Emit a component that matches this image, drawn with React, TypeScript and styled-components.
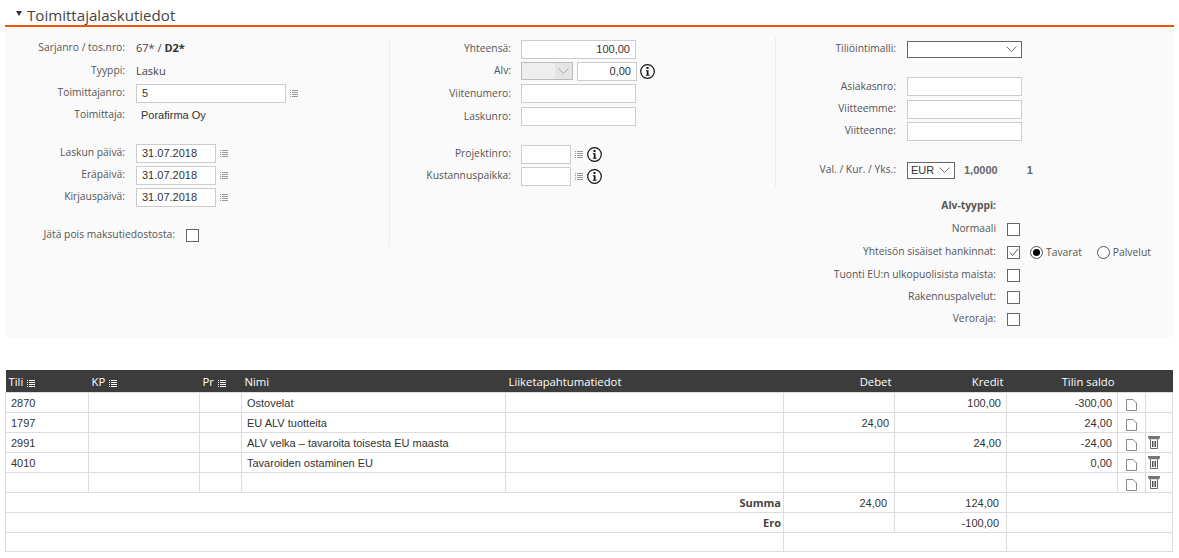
import React from 'react';
import styled, { createGlobalStyle } from 'styled-components';

const GlobalStyle = createGlobalStyle`
  html, body {
    margin: 0;
    padding: 0;
    background: #fff;
    font-family: "Open Sans", "Liberation Sans", sans-serif;
    color: #444;
  }
`;

const Page = styled.div`
  width: 1179px;
  height: 558px;
  overflow: hidden;
  padding: 0 5px;
  box-sizing: border-box;
`;

const Header = styled.div`
  height: 27px;
  border-bottom: 2px solid #f4500a;
  display: flex;
  align-items: center;
  gap: 5px;
  padding: 4px 0 0 11px;
  box-sizing: border-box;
`;

const Caret = styled.span`
  width: 0;
  height: 0;
  margin-top: -2px;
  border-left: 3px solid transparent;
  border-right: 3px solid transparent;
  border-top: 5px solid #333;
`;

const Title = styled.h1`
  margin: 0;
  font-size: 15.1px;
  font-weight: 400;
  color: #444;
`;

const FormPanel = styled.div`
  background: #fafafa;
  height: 310px;
  display: grid;
  grid-template-columns: 385px 386px 1fr;
  align-items: start;
  padding-top: 10px;
  box-sizing: border-box;
`;

const Column = styled.div<{ $rule?: boolean; $pt?: number }>`
  padding-top: ${p => p.$pt ?? 0}px;
  border-right: ${p => (p.$rule ? '1px solid #eee' : 'none')};
`;

const Row = styled.div<{ $h?: number; $mb?: number }>`
  display: flex;
  align-items: center;
  height: ${p => p.$h ?? 22}px;
  margin-bottom: ${p => p.$mb ?? 0}px;
`;

const Label = styled.label<{ $w: number; $gap?: number; $bold?: boolean }>`
  width: ${p => p.$w}px;
  flex: none;
  text-align: right;
  font-size: 10.3px;
  margin-right: ${p => p.$gap ?? 11}px;
  padding-bottom: 2px;
  font-weight: ${p => (p.$bold ? 700 : 400)};
  color: #555;
  white-space: nowrap;
`;

const Value = styled.span`
  font-size: 11px;
  color: #444;
  padding-bottom: 1px;
  b { color: #333; }
`;

const SupplierName = styled.span`
  margin-left: 5px;
  font-family: "Liberation Sans", sans-serif;
  font-size: 11px;
  color: #333;
`;

const Rate = styled.span<{ $ml: number }>`
  margin-left: ${p => p.$ml}px;
  font-family: "Liberation Sans", sans-serif;
  font-size: 11px;
  font-weight: 700;
  color: #666;
`;

const RadioText = styled.span`
  font-size: 10.3px;
  color: #555;
`;

const Field = styled.div<{ $w: number; $right?: boolean; $ml?: number }>`
  width: ${p => p.$w}px;
  height: 19px;
  margin-left: ${p => p.$ml ?? 0}px;
  border: 1px solid #ccc;
  background: #fff;
  box-sizing: border-box;
  font-family: "Liberation Sans", sans-serif;
  font-size: 11px;
  line-height: 17px;
  padding: 0 5px;
  color: #333;
  text-align: ${p => (p.$right ? 'right' : 'left')};
`;

const Select = styled.div<{ $w: number }>`
  width: ${p => p.$w}px;
  height: 17px;
  border: 1px solid #666;
  background: #fff;
  box-sizing: border-box;
  display: flex;
  align-items: center;
  justify-content: space-between;
  padding: 0 4px 0 3px;
  font-family: "Liberation Sans", sans-serif;
  font-size: 11px;
  color: #333;
`;

const DisabledSelect = styled.div<{ $w: number }>`
  width: ${p => p.$w}px;
  height: 18px;
  border: 1px solid #bbb;
  background: #eee;
  box-sizing: border-box;
  display: flex;
  justify-content: flex-end;
`;

const SelectArrow = styled.span`
  width: 17px;
  background: #e4e4e4;
  display: flex;
  align-items: center;
  justify-content: center;
`;

const Check = styled.span`
  width: 13px;
  height: 13px;
  border: 1px solid #666;
  background: #fff;
  box-sizing: border-box;
  display: inline-flex;
  align-items: center;
  justify-content: center;
  flex: none;
`;

const Radio = styled.span<{ $on?: boolean }>`
  width: 13px;
  height: 13px;
  border-radius: 50%;
  border: 1px solid #555;
  background: #fff;
  box-sizing: border-box;
  display: inline-flex;
  align-items: center;
  justify-content: center;
  margin-left: ${p => (p.$on ? 10 : 15)}px;
  margin-right: 3px;
  flex: none;
  &::after {
    content: '';
    display: ${p => (p.$on ? 'block' : 'none')};
    width: 7px;
    height: 7px;
    border-radius: 50%;
    background: #000;
  }
`;

const Table = styled.table`
  width: 1167px;
  margin-top: 33px;
  border-collapse: collapse;
  table-layout: fixed;
  font-family: "Liberation Sans", sans-serif;
  font-size: 11px;
  color: #333;
`;

const Th = styled.th<{ $right?: boolean }>`
  background: #3c3c3c;
  color: #fff;
  height: 22px;
  padding: 0 3px 0 ${p => (p.$right ? 0 : 3)}px;
  font-family: "Open Sans", sans-serif;
  font-size: 11.3px;
  font-weight: 400;
  text-align: ${p => (p.$right ? 'right' : 'left')};
  white-space: nowrap;
`;

const Td = styled.td<{ $right?: boolean; $pad?: number; $h?: number }>`
  border: 1px solid #ddd;
  height: ${p => p.$h ?? 19}px;
  padding: 0 ${p => p.$pad ?? 5}px 0 5px;
  text-align: ${p => (p.$right ? 'right' : 'left')};
  white-space: nowrap;
`;

const TotalLabel = styled(Td)`
  font-family: "Open Sans", sans-serif;
  font-weight: 700;
  text-align: right;
  color: #444;
`;

const IconCell = styled(Td)`
  padding: 0;
`;

const ListSvg = styled.svg`
  flex: none;
  margin-left: 4px;
  vertical-align: -1px;
`;

const InfoSvg = styled.svg<{ $ml: number }>`
  flex: none;
  margin-left: ${p => p.$ml}px;
`;

const DocSvg = styled.svg`
  display: block;
  margin: 5px 0 0 8px;
`;

const TrashSvg = styled.svg`
  display: block;
  margin: -1px 0 0 2px;
`;

const ListIcon = ({ light }: { light?: boolean }) => (
  <ListSvg width="8" height="7" viewBox="0 0 8 7">
    {[0.5, 2.5, 4.5, 6.5].map(y => (
      <g key={y} stroke={light ? '#fff' : '#999'} strokeWidth="1">
        <path d={`M0 ${y}h1`} />
        <path d={`M2 ${y}h6`} />
      </g>
    ))}
  </ListSvg>
);

const Chevron = ({ color = '#777' }: { color?: string }) => (
  <svg width="11" height="6" viewBox="0 0 11 6">
    <path d="M0.5 0.5 5.5 5.5 10.5 0.5" fill="none" stroke={color} strokeWidth="1" />
  </svg>
);

const Info = ({ ml = 4 }: { ml?: number }) => (
  <InfoSvg $ml={ml} width="15" height="15" viewBox="0 0 15 15">
    <circle cx="7.5" cy="7.5" r="6.8" fill="#fff" stroke="#111" strokeWidth="1.2" />
    <rect x="6.5" y="3" width="2" height="2" fill="#111" />
    <path d="M5.8 6.2h2.7v4.6h1v1H5.8v-1h1V7.2h-1z" fill="#111" />
  </InfoSvg>
);

const Doc = () => (
  <DocSvg width="11" height="12" viewBox="0 0 11 12">
    <path d="M0.5 0.5h6.5l3.5 3.5v7.5H0.5z" fill="#fff" stroke="#888" strokeWidth="1" />
  </DocSvg>
);

const Trash = () => (
  <TrashSvg width="12" height="13" viewBox="0 0 12 13">
    <path d="M0 0h12v2.5h-1v1H1v-1H0z" fill="#777" />
    <path d="M2.5 3.5v9h7v-9" fill="#fff" stroke="#666" strokeWidth="1" />
    <path d="M4.5 5v6M6 5v6M7.5 5v6" stroke="#555" strokeWidth="1" />
  </TrashSvg>
);

const Tick = () => (
  <svg width="10" height="9" viewBox="0 0 10 9">
    <path d="M1 4.5 3.5 7.5 9 1" fill="none" stroke="#555" strokeWidth="1" />
  </svg>
);

const rows = [
  { tili: '2870', nimi: 'Ostovelat', kredit: '100,00', saldo: '-300,00' },
  { tili: '1797', nimi: 'EU ALV tuotteita', debet: '24,00', saldo: '24,00' },
  { tili: '2991', nimi: 'ALV velka – tavaroita toisesta EU maasta', kredit: '24,00', saldo: '-24,00', del: true },
  { tili: '4010', nimi: 'Tavaroiden ostaminen EU', saldo: '0,00', del: true },
  { nimi: '', del: true },
] as { tili?: string; nimi: string; debet?: string; kredit?: string; saldo?: string; del?: boolean }[];

const App = () => (
  <Page>
    <GlobalStyle />
    <Header>
      <Caret />
      <Title>Toimittajalaskutiedot</Title>
    </Header>
    <FormPanel>
      <Column $rule>
        <Row><Label $w={120}>Sarjanro / tos.nro:</Label><Value>67* / <b>D2*</b></Value></Row>
        <Row $h={23}><Label $w={120}>Tyyppi:</Label><Value>Lasku</Value></Row>
        <Row><Label $w={120}>Toimittajanro:</Label><Field $w={150}>5</Field><ListIcon /></Row>
        <Row $mb={16}><Label $w={120}>Toimittaja:</Label><SupplierName>Porafirma Oy</SupplierName></Row>
        <Row><Label $w={120}>Laskun päivä:</Label><Field $w={80}>31.07.2018</Field><ListIcon /></Row>
        <Row><Label $w={120}>Eräpäivä:</Label><Field $w={80}>31.07.2018</Field><ListIcon /></Row>
        <Row $mb={16}><Label $w={120}>Kirjauspäivä:</Label><Field $w={80}>31.07.2018</Field><ListIcon /></Row>
        <Row><Label $w={170}>Jätä pois maksutiedostosta:</Label><Check /></Row>
      </Column>
      <Column $rule $pt={1}>
        <Row><Label $w={121} $gap={10}>Yhteensä:</Label><Field $w={115} $right>100,00</Field></Row>
        <Row>
          <Label $w={121} $gap={10}>Alv:</Label>
          <DisabledSelect $w={52}><SelectArrow><Chevron color="#aaa" /></SelectArrow></DisabledSelect>
          <Field $w={60} $right $ml={4}>0,00</Field>
          <Info ml={3} />
        </Row>
        <Row $h={23}><Label $w={121} $gap={10}>Viitenumero:</Label><Field $w={115} /></Row>
        <Row $h={23} $mb={15}><Label $w={121} $gap={10}>Laskunro:</Label><Field $w={115} /></Row>
        <Row><Label $w={121} $gap={10}>Projektinro:</Label><Field $w={50} /><ListIcon /><Info /></Row>
        <Row><Label $w={121} $gap={10}>Kustannuspaikka:</Label><Field $w={50} /><ListIcon /><Info /></Row>
      </Column>
      <Column $pt={1}>
        <Row $mb={15}><Label $w={120}>Tiliöintimalli:</Label><Select $w={115}><span /><Chevron /></Select></Row>
        <Row $h={23}><Label $w={120}>Asiakasnro:</Label><Field $w={115} /></Row>
        <Row><Label $w={120}>Viitteemme:</Label><Field $w={115} /></Row>
        <Row $mb={17}><Label $w={120}>Viitteenne:</Label><Field $w={115} /></Row>
        <Row $mb={14}>
          <Label $w={120}>Val. / Kur. / Yks.:</Label>
          <Select $w={48}>EUR<Chevron /></Select>
          <Rate $ml={9}>1,0000</Rate>
          <Rate $ml={29}>1</Rate>
        </Row>
        <Row $mb={1}><Label $w={220} $bold>Alv-tyyppi:</Label></Row>
        <Row $mb={1}><Label $w={220}>Normaali</Label><Check /></Row>
        <Row $mb={1}>
          <Label $w={220}>Yhteisön sisäiset hankinnat:</Label>
          <Check><Tick /></Check>
          <Radio $on /><RadioText>Tavarat</RadioText>
          <Radio /><RadioText>Palvelut</RadioText>
        </Row>
        <Row><Label $w={220}>Tuonti EU:n ulkopuolisista maista:</Label><Check /></Row>
        <Row><Label $w={220}>Rakennuspalvelut:</Label><Check /></Row>
        <Row><Label $w={220}>Veroraja:</Label><Check /></Row>
      </Column>
    </FormPanel>
    <Table>
      <colgroup>
        <col width={83} /><col width={111} /><col width={42} /><col width={264} />
        <col width={278} /><col width={111} /><col width={112} /><col width={111} />
        <col width={28} /><col width={27} />
      </colgroup>
      <thead>
        <tr>
          <Th>Tili<ListIcon light /></Th>
          <Th>KP<ListIcon light /></Th>
          <Th>Pr<ListIcon light /></Th>
          <Th>Nimi</Th>
          <Th>Liiketapahtumatiedot</Th>
          <Th $right>Debet</Th>
          <Th $right>Kredit</Th>
          <Th $right>Tilin saldo</Th>
          <Th /><Th />
        </tr>
      </thead>
      <tbody>
        {rows.map((r, i) => (
          <tr key={i}>
            <Td>{r.tili}</Td>
            <Td />
            <Td />
            <Td>{r.nimi}</Td>
            <Td />
            <Td $right>{r.debet}</Td>
            <Td $right>{r.kredit}</Td>
            <Td $right>{r.saldo}</Td>
            <IconCell><Doc /></IconCell>
            <IconCell>{r.del && <Trash />}</IconCell>
          </tr>
        ))}
        <tr>
          <TotalLabel colSpan={5} $pad={2}>Summa</TotalLabel>
          <Td $right $pad={7}>24,00</Td>
          <Td $right $pad={7}>124,00</Td>
          <Td colSpan={3} />
        </tr>
        <tr>
          <TotalLabel colSpan={5} $pad={2}>Ero</TotalLabel>
          <Td />
          <Td $right $pad={7}>-100,00</Td>
          <Td colSpan={3} />
        </tr>
        <tr>
          <Td colSpan={5} $h={18} />
          <Td colSpan={2} $h={18} />
          <Td colSpan={3} $h={18} />
        </tr>
      </tbody>
    </Table>
  </Page>
);

export default App;
